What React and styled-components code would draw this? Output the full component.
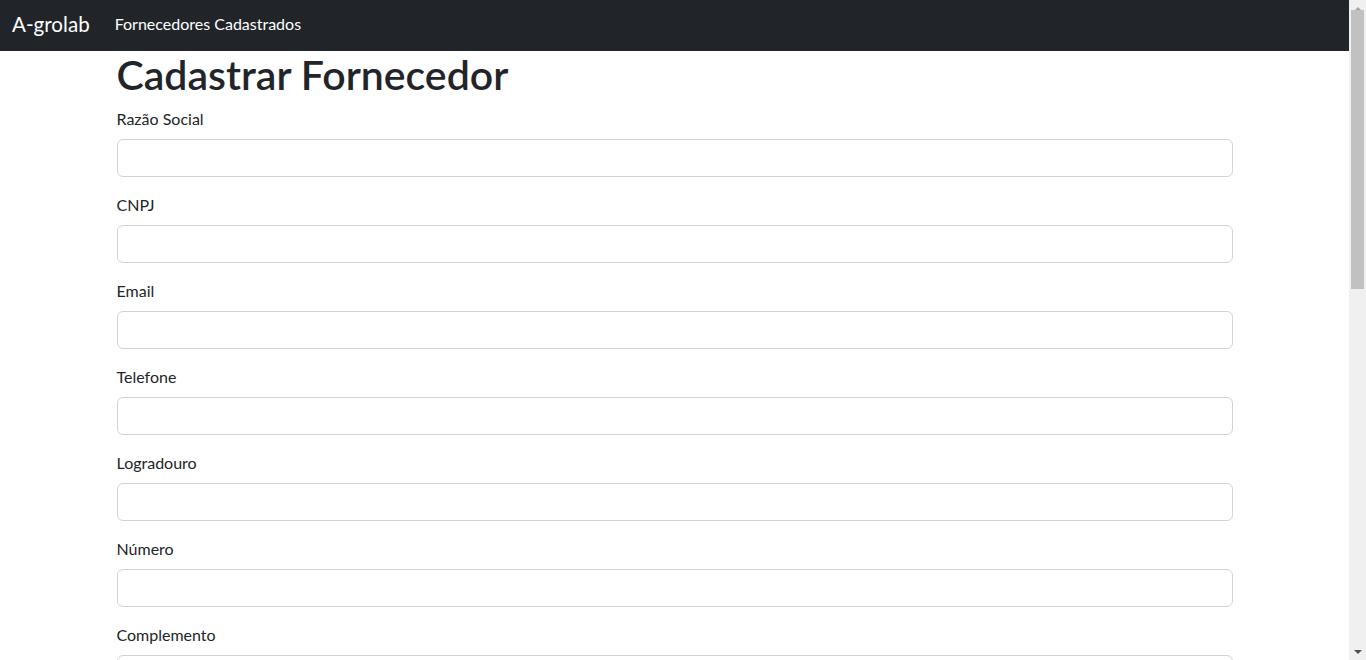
import React from 'react';
import styled, { createGlobalStyle } from 'styled-components';

const GlobalStyle = createGlobalStyle`
  * { box-sizing: border-box; }
  body {
    margin: 0;
    font-family: "Lato", "Open Sans", "Liberation Sans", sans-serif;
    font-size: 16px;
    line-height: 1.5;
    color: #212529;
    background: #fff;
    overflow: hidden;
  }
`;

const Window = styled.div`
  display: flex;
  height: 100vh;
`;

const Viewport = styled.div`
  flex: 1;
  min-width: 0;
  overflow: hidden;
`;

const ScrollBar = styled.div`
  width: 17px;
  flex-shrink: 0;
  background: #f0f0f0;
  display: flex;
  flex-direction: column;
`;

const ScrollArrow = styled.div`
  height: 17px;
  display: flex;
  align-items: center;
  justify-content: center;
  &::after {
    content: '';
    width: 0;
    height: 0;
    border-left: 4px solid transparent;
    border-right: 4px solid transparent;
    ${({ $down }) =>
      $down
        ? 'border-top: 4px solid #505050;'
        : 'border-bottom: 4px solid #a3a3a3;'}
  }
`;

const ScrollTrack = styled.div`
  flex: 1;
  padding: 0 2px;
`;

const ScrollThumb = styled.div`
  height: 279px;
  background: #c1c1c1;
  margin-top: -7px;
`;

const Navbar = styled.nav`
  height: 51px;
  background: #212529;
  display: flex;
  align-items: center;
  padding: 0 12px;
`;

const Brand = styled.a`
  font-size: 20.6px;
  color: #fff;
  text-decoration: none;
  margin-right: 25px;
  line-height: 30px;
  margin-top: -4px;
`;

const NavLink = styled.a`
  color: #fff;
  font-size: 16px;
  text-decoration: none;
  margin-top: -4px;
`;

const Container = styled.main`
  max-width: 1140px;
  margin: 0 auto;
  padding: 0 12px;
`;

const Title = styled.h1`
  font-size: 41px;
  font-weight: 600;
  line-height: 48px;
  margin: 0 0 8px;
`;

const Field = styled.div`
  margin-bottom: 16px;
`;

const Label = styled.label`
  display: block;
  margin-bottom: 8px;
`;

const Input = styled.input`
  display: block;
  width: 100%;
  height: 38px;
  padding: 6px 12px;
  font: inherit;
  color: #212529;
  border: 1px solid #ced4da;
  border-radius: 6px;
  background: #fff;
`;

const SubmitButton = styled.button`
  background: #0d6efd;
  color: #fff;
  border: none;
  border-radius: 6px;
  padding: 6px 12px;
  font: inherit;
  margin-bottom: 24px;
`;

const fields = [
  'Razão Social',
  'CNPJ',
  'Email',
  'Telefone',
  'Logradouro',
  'Número',
  'Complemento',
  'Bairro',
  'Cidade',
  'Estado',
  'CEP',
  'País',
  'Inscrição Estadual',
  'Contato',
  'Observações',
];

const App = () => {
  return (
    <>
      <GlobalStyle />
      <Window>
        <Viewport>
          <Navbar>
            <Brand href="#">A-grolab</Brand>
            <NavLink href="#">Fornecedores Cadastrados</NavLink>
          </Navbar>
          <Container>
            <Title>Cadastrar Fornecedor</Title>
            <form>
              {fields.map((f) => (
                <Field key={f}>
                  <Label>{f}</Label>
                  <Input type="text" />
                </Field>
              ))}
              <SubmitButton type="submit">Cadastrar</SubmitButton>
            </form>
          </Container>
        </Viewport>
        <ScrollBar>
          <ScrollArrow />
          <ScrollTrack>
            <ScrollThumb />
          </ScrollTrack>
          <ScrollArrow $down />
        </ScrollBar>
      </Window>
    </>
  );
};

export default App;
